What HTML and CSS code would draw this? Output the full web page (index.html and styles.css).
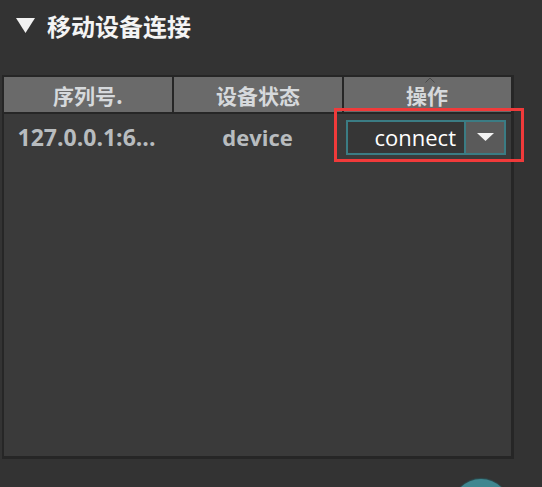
FILE: index.html
```html
<!DOCTYPE html>
<html lang="zh">
<head>
<meta charset="utf-8">
<link rel="stylesheet" href="styles.css">
</head>
<body>
<div class="page">
  <div class="title">
    <svg class="title-arrow" width="19" height="15" viewBox="0 0 19 15"><polygon points="0,0 19,0 9.5,15" fill="#f2f2f2"/></svg>
    <span class="title-text">移动设备连接</span>
  </div>
  <div class="panel">
    <div class="head">
      <div class="hcell">序列号.</div>
      <div class="hdiv"></div>
      <div class="hcell">设备状态</div>
      <div class="hdiv"></div>
      <div class="hcell last">操作
        <svg class="sort" width="10" height="6" viewBox="0 0 10 6"><polyline points="0.5,5.5 5,1 9.5,5.5" fill="none" stroke="#4a4a4a" stroke-width="1"/></svg>
      </div>
    </div>
    <div class="row">
      <div class="cell c1">127.0.0.1:6...</div>
      <div class="cell c2">device</div>
      <div class="cell c3">
        <div class="combo">
          <div class="combo-text">connect</div>
          <div class="combo-btn">
            <svg width="17" height="8" viewBox="0 0 17 8"><polygon points="0,0 17,0 8.5,8" fill="#f2f2f2"/></svg>
          </div>
        </div>
        <div class="highlight"></div>
      </div>
    </div>
  </div>
  <div class="fab"></div>
</div>
</body>
</html>
```
FILE: styles.css
```css
html, body {
  margin: 0;
  padding: 0;
  background: #333333;
  overflow: hidden;
}
.page {
  position: relative;
  width: 542px;
  height: 487px;
  overflow: hidden;
  font-family: "Open Sans", "Noto Sans CJK SC", sans-serif;
}
.title {
  height: 75px;
  display: flex;
  align-items: flex-start;
  padding-left: 16px;
  box-sizing: border-box;
}
.title-arrow {
  margin-top: 18px;
}
.title-text {
  margin-left: 12px;
  margin-top: 8px;
  font-family: "Noto Sans CJK SC", sans-serif;
  font-weight: bold;
  font-size: 24px;
  line-height: 36px;
  color: #f4f4f4;
}
.panel {
  margin-left: 2px;
  width: 512px;
  height: 384px;
  box-sizing: border-box;
  border-style: solid;
  border-color: #262626;
  border-width: 2px 3px 3px 2px;
  background: #3a3a3a;
}
.head {
  display: flex;
  height: 37px;
  box-sizing: border-box;
  border-bottom: 2px solid #262626;
  background: #6a6a6a;
}
.hcell {
  width: 168px;
  display: flex;
  align-items: center;
  justify-content: center;
  font-family: "Noto Sans CJK SC", sans-serif;
  font-weight: bold;
  font-size: 21px;
  color: #d6d9dc;
  position: relative;
}
.hcell.last {
  width: 166px;
}
.hdiv {
  width: 2px;
  background: #262626;
}
.sort {
  position: absolute;
  left: 81px;
  top: 0px;
}
.row {
  display: flex;
  height: 46px;
}
.cell {
  width: 170px;
  display: flex;
  align-items: center;
  justify-content: center;
  font-weight: bold;
  font-size: 22px;
  color: #b8bcbf;
}
.cell.c1 {
  font-size: 23px;
  padding-right: 4px;
  box-sizing: border-box;
}
.cell.c3 {
  width: 166px;
  justify-content: flex-start;
  padding-left: 4px;
  position: relative;
}
.combo {
  display: flex;
  width: 160px;
  height: 35px;
  box-sizing: border-box;
  border: 2px solid #3b7c84;
}
.combo-text {
  flex: 1;
  background: #363636;
  color: #ffffff;
  font-weight: normal;
  font-size: 22px;
  display: flex;
  align-items: center;
  justify-content: flex-end;
  padding-right: 8px;
  border-right: 2px solid #3b7c84;
}
.combo-btn {
  width: 38px;
  background: #5a5a5a;
  display: flex;
  align-items: center;
  justify-content: center;
}
.highlight {
  position: absolute;
  left: -8px;
  top: -6px;
  width: 190px;
  height: 54px;
  box-sizing: border-box;
  border: 3px solid #f03a3a;
}
.fab {
  position: absolute;
  left: 452px;
  top: 479px;
  width: 58px;
  height: 58px;
  border-radius: 50%;
  background: #3f8790;
  box-shadow: 0 -1px 1px #2a4f53;
}
```
